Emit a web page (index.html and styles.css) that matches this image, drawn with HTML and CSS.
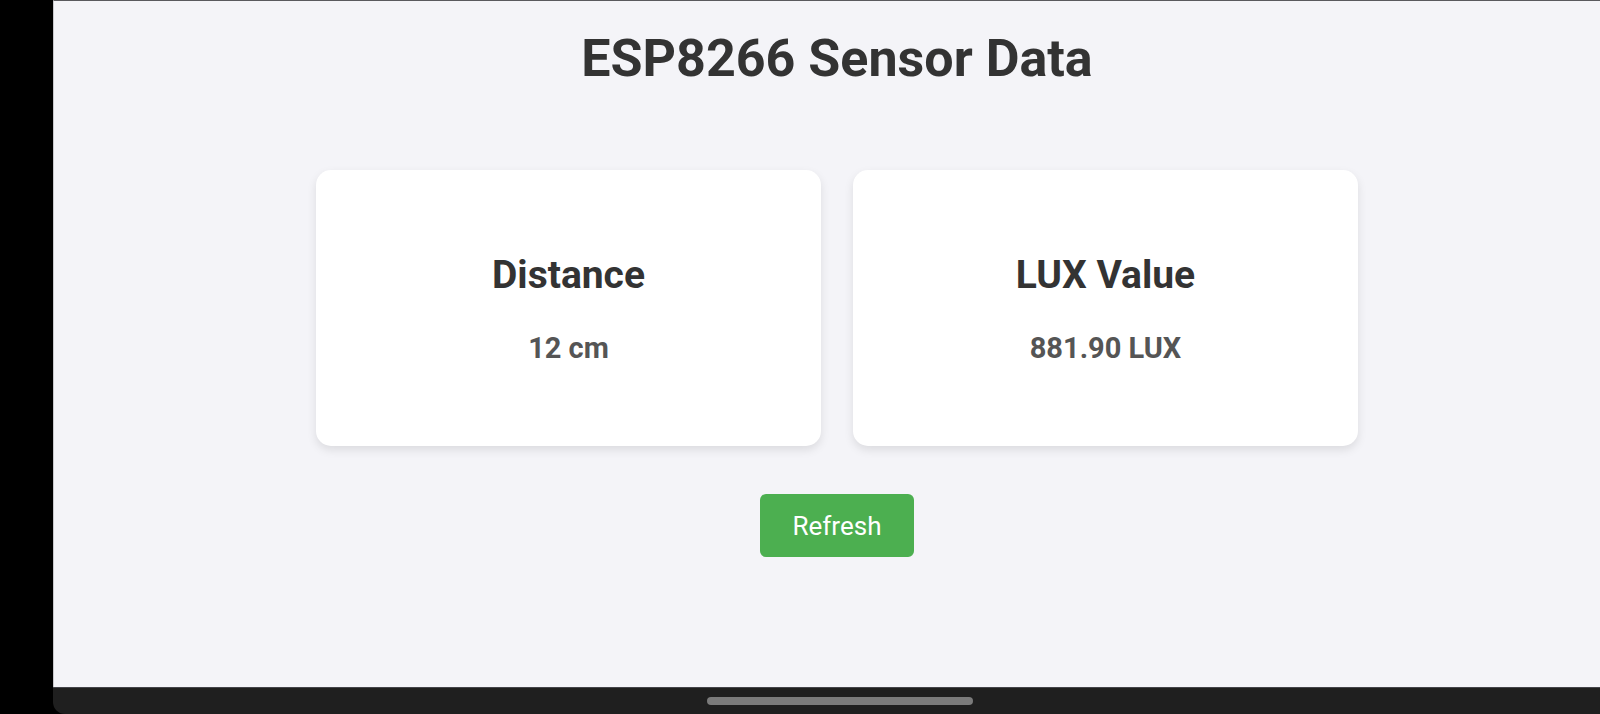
FILE: index.html
```html
<!DOCTYPE html>
<html lang="en">
<head>
<meta charset="utf-8">
<title>ESP8266 Sensor Data</title>
<link rel="stylesheet" href="styles.css">
</head>
<body>
<div class="device">
  <div class="bezel"></div>
  <div class="screen">
    <main class="page">
      <h1 class="title">ESP8266 Sensor Data</h1>
      <section class="cards">
        <div class="card">
          <h2 class="card-title">Distance</h2>
          <p class="card-value">12 cm</p>
        </div>
        <div class="card">
          <h2 class="card-title">LUX Value</h2>
          <p class="card-value">881.90 LUX</p>
        </div>
      </section>
      <button class="refresh" type="button">Refresh</button>
    </main>
    <div class="navbar"><span class="pill"></span></div>
  </div>
</div>
</body>
</html>
```
FILE: styles.css
```css
html, body {
  margin: 0;
  padding: 0;
  height: 100%;
  background: #000;
  font-family: Roboto, "Liberation Sans", Arial, sans-serif;
}

.device {
  display: flex;
  width: 1600px;
  height: 714px;
  background: #000;
}

.bezel {
  width: 53px;
  flex: none;
  background: #000;
}

.screen {
  flex: 1;
  display: flex;
  flex-direction: column;
  background: #000;
}

.page {
  flex: 1;
  display: flex;
  flex-direction: column;
  align-items: center;
  background: #f4f4f8;
  border-top: 1px solid #5a5a5e;
  border-left: 1px solid #c8c8cc;
  padding-left: 20px;
}

.title {
  margin: 27px 0 0;
  font-size: 52px;
  font-weight: 700;
  line-height: normal;
  color: #333;
}

.cards {
  display: flex;
  gap: 32px;
  margin-top: 81px;
}

.card {
  width: 505px;
  height: 276px;
  box-sizing: border-box;
  background: #fff;
  border-radius: 15px;
  box-shadow: 0 4px 10px rgba(0, 0, 0, 0.1);
  display: flex;
  flex-direction: column;
  align-items: center;
  justify-content: center;
  gap: 33px;
}

.card-title {
  margin: 0;
  font-size: 39px;
  font-weight: 700;
  line-height: normal;
  color: #333;
}

.card-value {
  margin: 0;
  font-size: 29px;
  font-weight: 700;
  line-height: normal;
  color: #555;
}

.refresh {
  margin-top: 48px;
  width: 154px;
  height: 63px;
  border: none;
  border-radius: 6px;
  background: #4caf50;
  color: #fff;
  font-family: Roboto, "Liberation Sans", Arial, sans-serif;
  font-size: 26px;
  font-weight: 400;
  padding: 0;
  cursor: pointer;
}

.navbar {
  height: 26px;
  flex: none;
  background: #1f1f1f;
  border-top: 1px solid #44444a;
  border-bottom-left-radius: 12px;
  display: flex;
  justify-content: center;
  align-items: center;
  padding-left: 26px;
}

.pill {
  width: 266px;
  height: 8px;
  border-radius: 4px;
  background: #7b7b7b;
}
```
